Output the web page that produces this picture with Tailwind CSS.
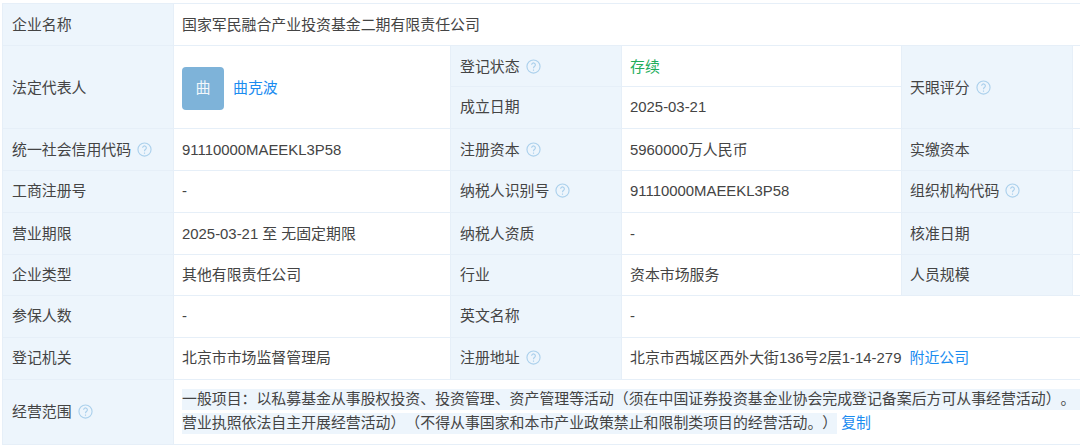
<!DOCTYPE html>
<html lang="zh-CN">
  <head>
    <meta charset="UTF-8" />
    <title>企业工商信息</title>
    <script src="https://cdn.jsdelivr.net/npm/@tailwindcss/browser@4"></script>
  </head>
  <body class="bg-white w-[1080px] h-[448px] overflow-hidden font-['Liberation_Sans','Noto_Sans_CJK_SC',sans-serif] text-[14.9px] text-[#444] [text-spacing-trim:space-all]">
    <div class="pt-[3px] pl-[2px] w-[1100px]">
      <table class="table-fixed border-collapse w-[1098px] [&_td]:border [&_td]:border-[#e6eff8] [&_td]:pl-[8px] [&_td]:pt-[2px]">
        <colgroup>
          <col class="w-[171px]" />
          <col class="w-[277px]" />
          <col class="w-[171px]" />
          <col class="w-[280px]" />
          <col class="w-[171px]" />
          <col />
        </colgroup>
        <tbody>
          <tr class="h-[42px]">
            <td class="bg-[#edf5fc] pl-[9px]!">企业名称</td>
            <td colspan="5">国家军民融合产业投资基金二期有限责任公司</td>
          </tr>
          <tr class="h-[41px]">
            <td rowspan="2" class="bg-[#edf5fc] pl-[9px]!">法定代表人</td>
            <td rowspan="2">
              <div class="flex items-center gap-[9px]">
                <div class="w-[42px] h-[43px] rounded-[4px] bg-[#7eb3d9] text-white/90 flex items-center justify-center text-[15px]">曲</div>
                <span class="text-[#1a8cf0]">曲克波</span>
              </div>
            </td>
            <td class="bg-[#edf5fc] pl-[9px]!">登记状态 <svg class="inline-block w-[15px] h-[15px] ml-[2px] align-[-2px]" viewBox="0 0 16 16" fill="none" stroke="#abd0ec" stroke-width="1.2"><circle cx="8" cy="8" r="7" /><path d="M6 6.2a2 2 0 1 1 3.2 1.6c-.8.6-1.2 1-1.2 2M8 11.2v1.2" /></svg></td>
            <td class="text-[#23ad5c]">存续</td>
            <td rowspan="2" class="bg-[#edf5fc]">天眼评分 <svg class="inline-block w-[15px] h-[15px] ml-[2px] align-[-2px]" viewBox="0 0 16 16" fill="none" stroke="#abd0ec" stroke-width="1.2"><circle cx="8" cy="8" r="7" /><path d="M6 6.2a2 2 0 1 1 3.2 1.6c-.8.6-1.2 1-1.2 2M8 11.2v1.2" /></svg></td>
            <td rowspan="2"></td>
          </tr>
          <tr class="h-[42px]">
            <td class="bg-[#edf5fc] pl-[9px]! pt-0!">成立日期</td>
            <td class="pt-0!">2025-03-21</td>
          </tr>
          <tr class="h-[42px]">
            <td class="bg-[#edf5fc] pl-[9px]!">统一社会信用代码 <svg class="inline-block w-[15px] h-[15px] ml-[2px] align-[-2px]" viewBox="0 0 16 16" fill="none" stroke="#abd0ec" stroke-width="1.2"><circle cx="8" cy="8" r="7" /><path d="M6 6.2a2 2 0 1 1 3.2 1.6c-.8.6-1.2 1-1.2 2M8 11.2v1.2" /></svg></td>
            <td>91110000MAEEKL3P58</td>
            <td class="bg-[#edf5fc] pl-[9px]!">注册资本 <svg class="inline-block w-[15px] h-[15px] ml-[2px] align-[-2px]" viewBox="0 0 16 16" fill="none" stroke="#abd0ec" stroke-width="1.2"><circle cx="8" cy="8" r="7" /><path d="M6 6.2a2 2 0 1 1 3.2 1.6c-.8.6-1.2 1-1.2 2M8 11.2v1.2" /></svg></td>
            <td>5960000万人民币</td>
            <td class="bg-[#edf5fc]">实缴资本</td>
            <td></td>
          </tr>
          <tr class="h-[42px]">
            <td class="bg-[#edf5fc] pl-[9px]! pt-0!">工商注册号</td>
            <td class="pt-0!">-</td>
            <td class="bg-[#edf5fc] pl-[9px]! pt-0!">纳税人识别号 <svg class="inline-block w-[15px] h-[15px] ml-[2px] align-[-2px]" viewBox="0 0 16 16" fill="none" stroke="#abd0ec" stroke-width="1.2"><circle cx="8" cy="8" r="7" /><path d="M6 6.2a2 2 0 1 1 3.2 1.6c-.8.6-1.2 1-1.2 2M8 11.2v1.2" /></svg></td>
            <td class="pt-0!">91110000MAEEKL3P58</td>
            <td class="bg-[#edf5fc] pt-0!">组织机构代码 <svg class="inline-block w-[15px] h-[15px] ml-[2px] align-[-2px]" viewBox="0 0 16 16" fill="none" stroke="#abd0ec" stroke-width="1.2"><circle cx="8" cy="8" r="7" /><path d="M6 6.2a2 2 0 1 1 3.2 1.6c-.8.6-1.2 1-1.2 2M8 11.2v1.2" /></svg></td>
            <td></td>
          </tr>
          <tr class="h-[42px]">
            <td class="bg-[#edf5fc] pl-[9px]!">营业期限</td>
            <td>2025-03-21 至 无固定期限</td>
            <td class="bg-[#edf5fc] pl-[9px]!">纳税人资质</td>
            <td>-</td>
            <td class="bg-[#edf5fc]">核准日期</td>
            <td></td>
          </tr>
          <tr class="h-[41px]">
            <td class="bg-[#edf5fc] pl-[9px]! pt-0!">企业类型</td>
            <td class="pt-0!">其他有限责任公司</td>
            <td class="bg-[#edf5fc] pl-[9px]! pt-0!">行业</td>
            <td class="pt-0!">资本市场服务</td>
            <td class="bg-[#edf5fc] pt-0!">人员规模</td>
            <td></td>
          </tr>
          <tr class="h-[42px]">
            <td class="bg-[#edf5fc] pl-[9px]! pt-0!">参保人数</td>
            <td class="pt-0!">-</td>
            <td class="bg-[#edf5fc] pl-[9px]! pt-0!">英文名称</td>
            <td colspan="3" class="pt-0!">-</td>
          </tr>
          <tr class="h-[42px]">
            <td class="bg-[#edf5fc] pl-[9px]! pt-0!">登记机关</td>
            <td class="pt-0!">北京市市场监督管理局</td>
            <td class="bg-[#edf5fc] pl-[9px]! pt-0!">注册地址 <svg class="inline-block w-[15px] h-[15px] ml-[2px] align-[-2px]" viewBox="0 0 16 16" fill="none" stroke="#abd0ec" stroke-width="1.2"><circle cx="8" cy="8" r="7" /><path d="M6 6.2a2 2 0 1 1 3.2 1.6c-.8.6-1.2 1-1.2 2M8 11.2v1.2" /></svg></td>
            <td colspan="3" class="pt-0!">北京市西城区西外大街136号2层1-14-279 <span class="ml-[4px] text-[#1a8cf0]">附近公司</span></td>
          </tr>
          <tr class="h-[65px]">
            <td class="bg-[#edf5fc] pl-[9px]! pt-0!">经营范围 <svg class="inline-block w-[15px] h-[15px] ml-[2px] align-[-2px]" viewBox="0 0 16 16" fill="none" stroke="#abd0ec" stroke-width="1.2"><circle cx="8" cy="8" r="7" /><path d="M6 6.2a2 2 0 1 1 3.2 1.6c-.8.6-1.2 1-1.2 2M8 11.2v1.2" /></svg></td>
            <td colspan="5" class="pt-0!">
              <div class="h-[21px] leading-[21px] bg-[#edf5fc] whitespace-nowrap">一般项目：以私募基金从事股权投资、投资管理、资产管理等活动（须在中国证券投资基金业协会完成登记备案后方可从事经营活动）。</div>
              <div class="mt-[2px] flex items-center gap-[4px]">
                <span class="h-[21px] leading-[21px] bg-[#edf5fc] whitespace-nowrap">营业执照依法自主开展经营活动）（不得从事国家和本市产业政策禁止和限制类项目的经营活动。）</span>
                <span class="text-[#1a8cf0]">复制</span>
              </div>
            </td>
          </tr>
        </tbody>
      </table>
    </div>
  </body>
</html>
